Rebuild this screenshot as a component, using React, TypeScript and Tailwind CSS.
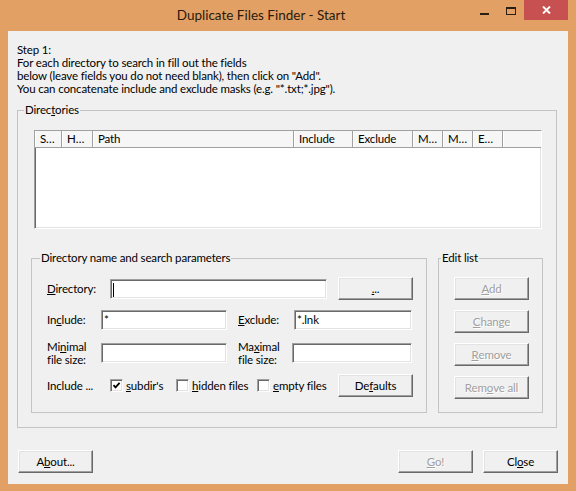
import React from 'react'

const RAISED =
  'border border-t-white border-l-white border-b-[#696969] border-r-[#696969] bg-[#f0f0f0] shadow-[inset_-1px_-1px_0_#a0a0a0,inset_1px_1px_0_#e3e3e3]'
const SUNKEN =
  'border border-t-[#a0a0a0] border-l-[#a0a0a0] border-b-white border-r-white bg-white shadow-[inset_1px_1px_0_#696969,inset_-1px_-1px_0_#e3e3e3]'

type BtnProps = {
  children: React.ReactNode
  disabled?: boolean
  className?: string
}

function Btn({ children, disabled, className = '' }: BtnProps) {
  return (
    <button
      type="button"
      className={`flex h-[23px] w-[75px] items-center justify-center ${RAISED} ${
        disabled ? 'text-[#a0a0a0] [text-shadow:1px_1px_0_#fff]' : 'text-black'
      } ${className}`}
    >
      {children}
    </button>
  )
}

function Field({ width, children }: { width: string; children?: React.ReactNode }) {
  return (
    <div className={`flex h-[20px] items-start pl-[2px] pt-[1px] leading-[15px] ${SUNKEN} ${width}`}>
      {children}
    </div>
  )
}

function CheckBox({ checked, label }: { checked?: boolean; label: React.ReactNode }) {
  return (
    <div className="flex items-center">
      <span className={`flex h-[13px] w-[13px] items-center justify-center ${SUNKEN}`}>
        {checked && (
          <svg width="9" height="9" viewBox="0 0 9 9">
            <polyline points="1.5,4.2 3.5,6.4 7.6,1.8" fill="none" stroke="#000" strokeWidth="1.8" />
          </svg>
        )}
      </span>
      <span className="ml-[3px]">{label}</span>
    </div>
  )
}

const COLUMNS = [
  { label: 'S…', w: 'w-[27px]' },
  { label: 'H…', w: 'w-[31px]' },
  { label: 'Path', w: 'w-[201px]' },
  { label: 'Include', w: 'w-[59px]' },
  { label: 'Exclude', w: 'w-[60px]' },
  { label: 'M…', w: 'w-[30px]' },
  { label: 'M…', w: 'w-[30px]' },
  { label: 'E…', w: 'w-[30px]' }
]

export default function App() {
  return (
    <div className="flex h-[491px] w-[576px] flex-col bg-[#e2a065] text-[11.5px] tracking-[-0.15px] text-black [font-family:Lato,'Noto_Sans',sans-serif]">
      {/* title bar */}
      <div className="flex h-[31px] shrink-0">
        <div className="flex-1 pl-[51px] pt-[5px] text-center text-[13.5px] leading-[20px] tracking-normal text-[#2a1a0c]">
          Duplicate Files Finder - Start
        </div>
        <div className="flex h-[20px] w-[27px] items-end justify-center pb-[5px]">
          <span className="h-[2px] w-[9px] bg-[#2a1f16]" />
        </div>
        <div className="flex h-[20px] w-[26px] items-start justify-center pt-[7px]">
          <span className="h-[8px] w-[10px] border border-t-2 border-[#2a1f16]" />
        </div>
        <div className="mr-[8px] flex h-[20px] w-[44px] items-center justify-center bg-[#c75050]">
          <svg width="9" height="8" viewBox="0 0 9 8">
            <path d="M1 0.5 L8 7.5 M8 0.5 L1 7.5" stroke="#fff" strokeWidth="1.9" />
          </svg>
        </div>
      </div>

      {/* client area */}
      <div className="mx-[8px] flex h-[453px] w-[560px] flex-col bg-[#f0f0f0]">
        <div className="ml-[9px] mt-[12px] leading-[13px]">
          <div>Step 1:</div>
          <div>For each directory to search in fill out the fields</div>
          <div>below (leave fields you do not need blank), then click on "Add".</div>
          <div>You can concatenate include and exclude masks (e.g. "*.txt;*.jpg").</div>
        </div>

        <fieldset className="ml-[9px] mt-[8px] w-[540px] border border-[#c4c4c4] pb-[14px] pl-[6px] pt-[13px]">
          <legend className="px-[1px] leading-[14px]">
            Direc<u className="underline-offset-[1px]">t</u>ories
          </legend>

          <div className={`ml-[10px] h-[99px] w-[508px] ${SUNKEN}`}>
            <div className="flex h-[17px] border-b border-b-[#a0a0a0] bg-[#f6f6f6] leading-[16px]">
              {COLUMNS.map((c, i) => (
                <div
                  key={i}
                  className={`${c.w} shrink-0 truncate border-r border-r-[#a0a0a0] pl-[5px] shadow-[inset_1px_0_0_#fff]`}
                >
                  {c.label}
                </div>
              ))}
              <div className="flex-1 shadow-[inset_1px_0_0_#fff]" />
            </div>
          </div>

          <div className="ml-[7px] mt-[22px] flex gap-[11px]">
            {/* directory name and search parameters */}
            <fieldset className="h-[162px] w-[396px] border border-[#c4c4c4] pl-[8px]">
              <legend className="px-[1px] leading-[14px]">Directory name and search parameters</legend>

              <div className="ml-[7px] mt-[12px] flex h-[23px] items-center">
                <div className="w-[63px]">
                  <u>D</u>irectory:
                </div>
                <Field width="w-[217px]">
                  <span className="mt-[2px] h-[14px] w-[1px] bg-black" />
                </Field>
                <Btn className="ml-[11px]">
                  <u>.</u>..
                </Btn>
              </div>

              <div className="ml-[7px] mt-[10px] flex h-[20px] items-center">
                <div className="w-[54px]">
                  In<u>c</u>lude:
                </div>
                <Field width="w-[126px]">*</Field>
                <div className="ml-[11px] w-[56px]">
                  <u>E</u>xclude:
                </div>
                <Field width="w-[118px]">*.lnk</Field>
              </div>

              <div className="ml-[7px] mt-[10px] flex h-[26px] items-center">
                <div className="w-[54px] leading-[13px]">
                  Mi<u>n</u>imal
                  <br />
                  file size:
                </div>
                <Field width="w-[126px]" />
                <div className="ml-[11px] w-[54px] leading-[13px]">
                  Ma<u>x</u>imal
                  <br />
                  file size:
                </div>
                <Field width="w-[120px]" />
              </div>

              <div className="ml-[7px] mt-[8px] flex h-[23px] items-center">
                <div className="w-[63px]">Include ...</div>
                <div className="w-[66px]">
                  <CheckBox
                    checked
                    label={
                      <>
                        <u>s</u>ubdir's
                      </>
                    }
                  />
                </div>
                <div className="w-[81px]">
                  <CheckBox
                    label={
                      <>
                        <u>h</u>idden files
                      </>
                    }
                  />
                </div>
                <div className="w-[81px]">
                  <CheckBox
                    label={
                      <>
                        <u>e</u>mpty files
                      </>
                    }
                  />
                </div>
                <Btn>
                  De<u>f</u>aults
                </Btn>
              </div>
            </fieldset>

            {/* edit list */}
            <fieldset className="flex h-[162px] w-[105px] flex-col border border-[#c4c4c4] pl-[2px]">
              <legend className="px-[1px] leading-[14px]">Edit list</legend>
              <div className="ml-[13px] mt-[12px] flex flex-col gap-[10px]">
                <Btn disabled>
                  <u>A</u>dd
                </Btn>
                <Btn disabled>
                  <u>C</u>hange
                </Btn>
                <Btn disabled>
                  <u>R</u>emove
                </Btn>
                <Btn disabled>
                  Rem<u>o</u>ve all
                </Btn>
              </div>
            </fieldset>
          </div>
        </fieldset>

        <div className="mx-[10px] mt-[22px] flex">
          <Btn>
            A<u>b</u>out...
          </Btn>
          <div className="flex-1" />
          <Btn disabled>
            <u>G</u>o!
          </Btn>
          <Btn className="ml-[10px]">
            Cl<u>o</u>se
          </Btn>
        </div>
      </div>
    </div>
  )
}
